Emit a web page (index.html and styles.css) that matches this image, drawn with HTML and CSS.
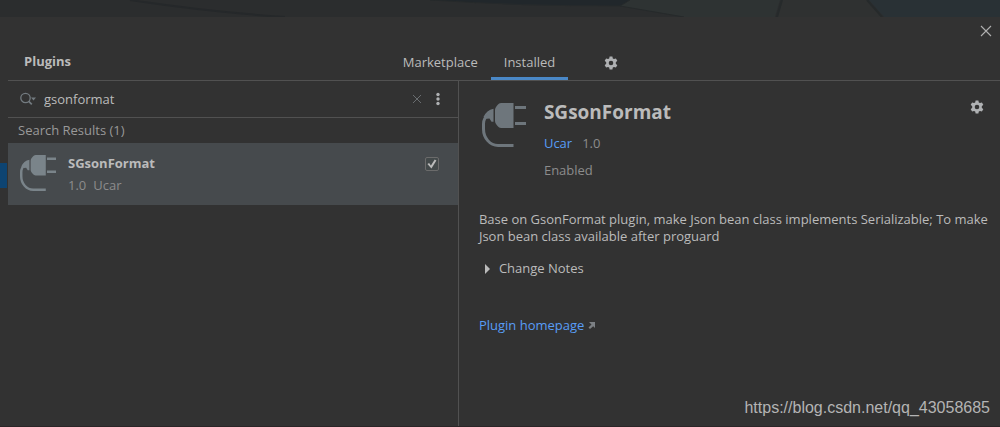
FILE: index.html
```html
<!DOCTYPE html>
<html lang="en">
<head>
<meta charset="utf-8">
<title>Plugins</title>
<link rel="stylesheet" href="styles.css">
</head>
<body>
<svg width="0" height="0" class="symbols" aria-hidden="true">
  <symbol id="gear" viewBox="0 0 14 14">
    <path fill-rule="evenodd" d="M5.600 .5h2.800l.4 1.900 1.200.7 1.900-.7 1.400 2.400-1.500 1.400v1.600l1.500 1.400-1.400 2.400-1.900-.7-1.200.7-.4 1.900H5.600l-.4-1.900-1.200-.7-1.900.7L.7 9.200l1.500-1.400V6.200L.7 4.800l1.400-2.400 1.900.7 1.200-.7zM7 4.700a2.300 2.300 0 1 0 0 4.600 2.300 2.300 0 0 0 0-4.600z"/>
  </symbol>
  <symbol id="plug" viewBox="0 0 44 44">
    <path d="M19 0H31.500V25H19Q17 25 15.500 23L14 21Q13 19.500 13 18V7Q13 5.500 14 4L15.500 2Q17 0 19 0zM33 3h11v3H33zM33 19h11v3H33zM11.500 5.700v13L9.500 18.700 7.500 15.500 5 15.800 1.500 14Q4.500 7 11.500 5.700z"/>
    <path d="M6 12.500Q1.500 15 1.500 21V26C1.500 35 8 42.500 16 42.500H31.500" fill="none" stroke="currentColor" stroke-width="3"/>
  </symbol>
</svg>
<div class="backdrop">
  <svg viewBox="0 0 1000 17" preserveAspectRatio="none" aria-hidden="true">
    <path d="M130 0Q210 12 285 17" stroke="#25282a" stroke-width="2" fill="none"/>
    <path d="M430 0H630L620 6 520 5z" fill="#21272b"/>
    <path d="M630 0H780L775 17H684L620 6z" fill="#2e3333"/>
    <path d="M430 0Q520 6 620 6L684 17M630 0L620 6" stroke="#262a2b" fill="none"/>
    <path d="M782 0H867L882 17H777z" fill="#2f3131"/>
    <path d="M782 0L777 17M867 0L882 17" stroke="#262a2b" stroke-width="2"/>
    <path d="M869 0H1000V17H884z" fill="#293135"/>
  </svg>
</div>
<div class="window">
  <header class="header">
    <h1 class="title">Plugins</h1>
    <nav class="tabs">
      <button class="tab" type="button">Marketplace</button>
      <button class="tab tab-active" type="button">Installed</button>
      <button class="icon-button tabs-gear" type="button" aria-label="Settings"><svg width="14" height="14"><use href="#gear"/></svg></button>
    </nav>
    <button class="icon-button close" type="button" aria-label="Close"><svg width="12" height="12" viewBox="0 0 12 12"><path d="M1 1l10 10M11 1L1 11" stroke="#b0b0b0" stroke-width="1.100"/></svg></button>
  </header>
  <main class="content">
    <section class="list">
      <div class="search">
        <svg width="17" height="14" viewBox="0 0 17 14" fill="none" aria-hidden="true"><circle cx="5.500" cy="6" r="4.700" stroke="#737b80" stroke-width="1.300"/><path d="M8.800 9.300l3 3" stroke="#737b80" stroke-width="1.700"/><path d="M11 5.500h5l-2.500 3z" fill="#737b80"/></svg>
        <input class="search-input" type="text" value="gsonformat" aria-label="Search plugins">
        <button class="icon-button" type="button" aria-label="Clear"><svg width="10" height="10" viewBox="0 0 10 10"><path d="M1 1l8 8M9 1L1 9" stroke="#696d70"/></svg></button>
        <button class="icon-button" type="button" aria-label="More"><svg width="4" height="14" viewBox="0 0 4 14"><circle cx="2" cy="2.500" r="1.700"/><circle cx="2" cy="7" r="1.700"/><circle cx="2" cy="11.500" r="1.700"/></svg></button>
      </div>
      <h2 class="group">Search Results (1)</h2>
      <div class="item">
        <svg class="plug" width="36" height="36" aria-hidden="true"><use href="#plug"/></svg>
        <label class="item-text" for="enabled">
          <span class="item-name">SGsonFormat</span>
          <span class="item-meta"><span>1.0</span><span>Ucar</span></span>
        </label>
        <input class="check" id="enabled" type="checkbox" checked>
      </div>
      <div class="marker"></div>
    </section>
    <section class="details">
      <div class="summary">
        <svg class="plug" width="44" height="44" aria-hidden="true"><use href="#plug"/></svg>
        <div class="summary-text">
          <h2 class="name">SGsonFormat</h2>
          <p class="vendor"><a class="link" href="#">Ucar</a><span class="muted">1.0</span></p>
          <p class="muted">Enabled</p>
        </div>
        <button class="icon-button" type="button" aria-label="Plugin options"><svg width="14" height="14"><use href="#gear"/></svg></button>
      </div>
      <p class="description">Base on GsonFormat plugin, make Json bean class implements Serializable; To make Json bean class available after proguard</p>
      <button class="notes" type="button"><svg width="5" height="10" viewBox="0 0 5 10" aria-hidden="true"><path d="M0 0l5 5-5 5z"/></svg>Change Notes</button>
      <a class="link homepage" href="#">Plugin homepage<svg width="7" height="7" viewBox="0 0 7 7" aria-hidden="true"><path d="M1 0h6v6L5.200 4.200 2 7 .5 5.500 3.500 2.500z" fill="#7c8084"/></svg></a>
    </section>
  </main>
  <div class="watermark">https://blog.csdn.net/qq_43058685</div>
</div>
</body>
</html>
```

FILE: styles.css
```css
* {
  box-sizing: border-box;
}

body {
  margin: 0;
  min-height: 100vh;
  display: flex;
  flex-direction: column;
  background: #323232;
  color: #bbbbbb;
  font: 13px/17px "Open Sans", "Noto Sans", sans-serif;
}

h1, h2, p {
  margin: 0;
}

button, input {
  font: inherit;
  color: inherit;
}

button {
  padding: 0;
  border: 0;
  background: none;
}

svg {
  display: block;
  flex: none;
}

.symbols {
  position: absolute;
}

.backdrop {
  height: 17px;
  background: #2b2d2e;
}

.backdrop svg {
  width: 100%;
  height: 100%;
}

.window {
  flex: 1;
  display: flex;
  flex-direction: column;
  position: relative;
  padding-left: 8px;
  border-bottom: 1px solid #2b2527;
}

.header {
  display: grid;
  grid-template-columns: 1fr auto 1fr;
  align-items: end;
  height: 64px;
  border-bottom: 1px solid #515151;
}

.title {
  padding: 0 16px 10px;
  font-size: 13px;
  line-height: 17px;
}

.tabs {
  display: flex;
  align-items: center;
}

.tab {
  padding: 9px 13px 6px;
  border-bottom: 3px solid transparent;
}

.tab-active {
  border-bottom-color: #4a88c7;
}

.tabs-gear {
  margin-left: 36px;
}

.icon-button {
  fill: #afb1b3;
}

.close {
  align-self: start;
  justify-self: end;
  padding: 8px;
}

.content {
  flex: 1;
  display: grid;
  grid-template-columns: 5fr 6fr;
}

.list {
  position: relative;
  border-right: 1px solid #515151;
}

.search {
  display: flex;
  align-items: center;
  gap: 14px;
  height: 37px;
  padding: 0 18px 0 12px;
  border-bottom: 1px solid #515151;
}

.search-input {
  flex: 1;
  min-width: 0;
  margin-left: -7px;
  padding: 0;
  border: 0;
  outline: 0;
  background: none;
}

.group {
  padding: 4px 10px;
  font-size: 13px;
  font-weight: 400;
  color: #999999;
}

.item {
  display: flex;
  align-items: flex-start;
  gap: 12px;
  padding: 12px 19px 11px 12px;
  background: #464a4d;
}

.plug {
  color: #6e767c;
  fill: currentColor;
}

.item .plug {
  color: #7a848a;
}

.item-text {
  flex: 1;
  display: flex;
  flex-direction: column;
  gap: 5px;
}

.item-name {
  font-weight: 700;
}

.item-meta {
  display: flex;
  gap: 7px;
  color: #8c8c8c;
}

.check {
  appearance: none;
  width: 14px;
  height: 14px;
  margin: 2px 0 0;
  border: 1px solid #6b6b6b;
  border-radius: 2px;
  background: #43494a;
  display: grid;
  place-items: center;
}

.check::before {
  content: "";
  width: 10px;
  height: 10px;
  background: #bbbbbb;
  clip-path: polygon(5% 50%, 22% 40%, 40% 65%, 78% 5%, 95% 15%, 45% 95%);
}

.marker {
  position: absolute;
  left: -8px;
  top: 82px;
  width: 7px;
  height: 25px;
  background: #0d4472;
}

.details {
  padding: 19px 6px 0 20px;
}

.summary {
  display: flex;
  align-items: flex-start;
  gap: 18px;
  padding: 0 10px 0 3px;
}

.summary .plug {
  margin-top: 3px;
}

.summary-text {
  flex: 1;
}

.name {
  font-size: 19px;
  line-height: 24px;
}

.vendor {
  display: flex;
  gap: 10px;
  margin: 11px 0 10px;
}

.muted {
  color: #8c8c8c;
}

.link {
  color: #589df6;
  text-decoration: none;
}

.description {
  margin: 32px 0 15px;
}

.notes {
  display: flex;
  align-items: center;
  gap: 9px;
  padding-left: 6px;
  fill: #bbbbbb;
}

.homepage {
  display: flex;
  align-items: center;
  gap: 4px;
  margin-top: 40px;
}

.watermark {
  position: absolute;
  right: 10px;
  bottom: 8px;
  color: #b4b4b4;
  font: 16px/20px "Liberation Sans", sans-serif;
}
```
